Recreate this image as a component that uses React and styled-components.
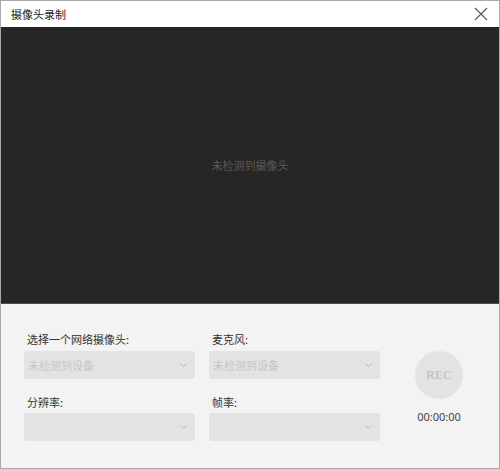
import React from "react";
import styled, { createGlobalStyle } from "styled-components";

const Global = createGlobalStyle`
  html, body { margin: 0; padding: 0; background: #ffffff; }
  body { font-family: "Noto Sans CJK SC", "Noto Sans", sans-serif; }
  * { box-sizing: border-box; }
`;

const Window = styled.div`
  width: 500px;
  height: 469px;
  border: 1px solid #a9a9a9;
  display: flex;
  flex-direction: column;
  background: #f3f3f3;
`;

const TitleBar = styled.div`
  height: 26px;
  flex: none;
  background: #ffffff;
  display: flex;
  align-items: center;
  justify-content: space-between;
  padding: 0 10px 0 10px;
`;

const Title = styled.span`
  font-size: 11px;
  color: #222;
  line-height: 1;
`;

const CloseBtn = styled.button`
  border: 0;
  background: transparent;
  padding: 0;
  width: 16px;
  height: 16px;
  display: flex;
  align-items: center;
  justify-content: center;
`;

const Preview = styled.div`
  height: 277px;
  flex: none;
  background: #262626;
  border-bottom: 1px solid #4d4d4d;
  display: flex;
  align-items: center;
  justify-content: center;
`;

const PreviewText = styled.span`
  font-size: 11px;
  color: #5a5a5a;
  margin-top: -1px;
`;

const Panel = styled.div`
  flex: 1;
  display: flex;
  align-items: flex-start;
  padding: 27px 0 0 23px;
`;

const Fields = styled.div`
  display: grid;
  grid-template-columns: 171px 171px;
  column-gap: 14px;
  row-gap: 15px;
`;

const Field = styled.div`
  display: flex;
  flex-direction: column;
`;

const Label = styled.div`
  font-size: 11px;
  line-height: 16px;
  color: #333;
  padding-left: 3px;
  margin-bottom: ${(p) => p.$gap}px;
`;

const Select = styled.div`
  height: 28px;
  background: #e3e3e3;
  border-radius: 3px;
  display: flex;
  align-items: center;
  padding: 0 8px 0 4px;
  & > svg { margin-left: auto; }
`;

const Placeholder = styled.span`
  font-size: 11px;
  color: #c6c6c6;
`;

const RecColumn = styled.div`
  display: flex;
  flex-direction: column;
  align-items: center;
  margin-left: 29px;
  padding-top: 20px;
  width: 60px;
`;

const RecButton = styled.div`
  width: 48px;
  height: 48px;
  border-radius: 50%;
  background: #e3e3e3;
  display: flex;
  align-items: center;
  justify-content: center;
  font-family: "Liberation Serif", serif;
  font-weight: bold;
  font-size: 12px;
  color: #c4c4c4;
`;

const Time = styled.div`
  margin-top: 10px;
  font-family: "Noto Sans", sans-serif;
  font-size: 11px;
  color: #444;
`;

const Chevron = () => (
  <svg width="7" height="4" viewBox="0 0 7 4">
    <path d="M0.5 0.5 L3.5 3.5 L6.5 0.5" fill="none" stroke="#b8b8b8" strokeWidth="1" />
  </svg>
);

export default function App() {
  return (
    <>
      <Global />
      <Window>
        <TitleBar>
          <Title>摄像头录制</Title>
          <CloseBtn aria-label="close">
            <svg width="14" height="14" viewBox="0 0 14 14">
              <path d="M1 1 L13 13 M13 1 L1 13" stroke="#555" strokeWidth="1.1" />
            </svg>
          </CloseBtn>
        </TitleBar>
        <Preview>
          <PreviewText>未检测到摄像头</PreviewText>
        </Preview>
        <Panel>
          <Fields>
            <Field>
              <Label $gap={4}>选择一个网络摄像头:</Label>
              <Select>
                <Placeholder>未检测到设备</Placeholder>
                <Chevron />
              </Select>
            </Field>
            <Field>
              <Label $gap={4}>麦克风:</Label>
              <Select>
                <Placeholder>未检测到设备</Placeholder>
                <Chevron />
              </Select>
            </Field>
            <Field>
              <Label $gap={3}>分辨率:</Label>
              <Select>
                <Chevron />
              </Select>
            </Field>
            <Field>
              <Label $gap={3}>帧率:</Label>
              <Select>
                <Chevron />
              </Select>
            </Field>
          </Fields>
          <RecColumn>
            <RecButton>REC</RecButton>
            <Time>00:00:00</Time>
          </RecColumn>
        </Panel>
      </Window>
    </>
  );
}
